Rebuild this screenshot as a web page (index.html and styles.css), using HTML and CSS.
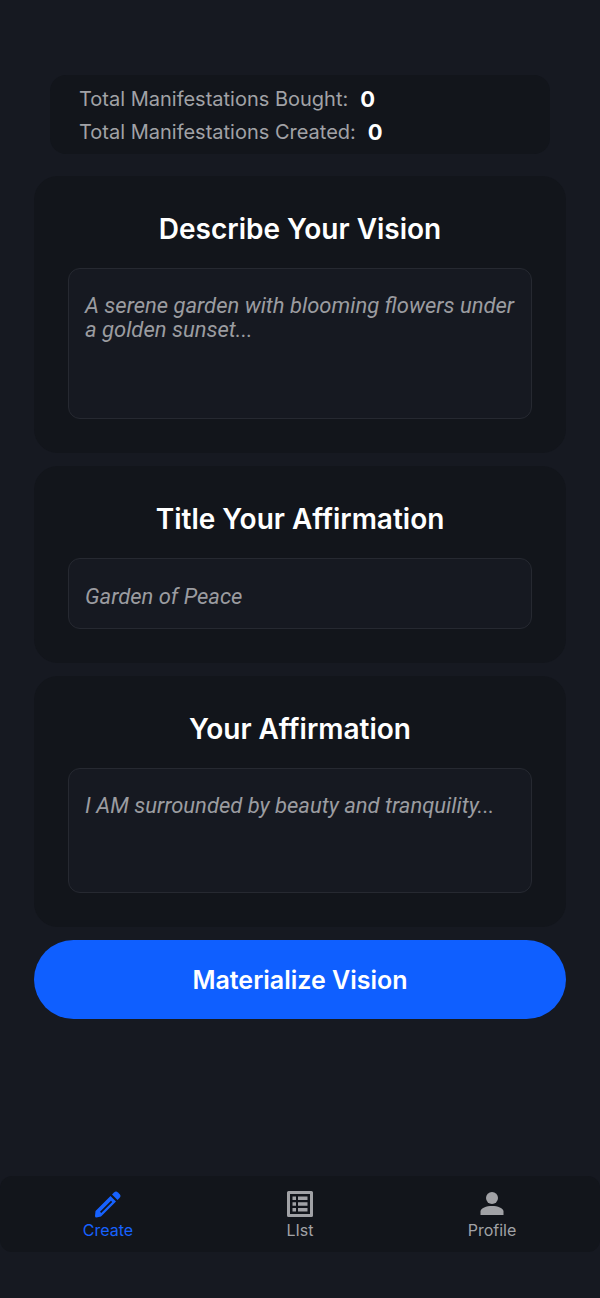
FILE: index.html
```html
<!DOCTYPE html>
<html lang="en">
<head>
    <meta charset="UTF-8">
    <meta name="viewport" content="width=device-width, initial-scale=1.0">
    <title>Create Manifestation</title>
    <link rel="stylesheet" href="styles.css">
</head>
<body>
    <main class="content">
        <section class="stats">
            <p class="stat">Total Manifestations Bought: <strong>0</strong></p>
            <p class="stat">Total Manifestations Created: <strong>0</strong></p>
        </section>

        <form class="vision-form">
            <div class="card">
                <label class="card-title" for="vision">Describe Your Vision</label>
                <textarea class="field field-tall" id="vision" placeholder="A serene garden with blooming flowers under a golden sunset..."></textarea>
            </div>

            <div class="card">
                <label class="card-title" for="title">Title Your Affirmation</label>
                <input class="field" id="title" type="text" placeholder="Garden of Peace">
            </div>

            <div class="card">
                <label class="card-title" for="affirmation">Your Affirmation</label>
                <textarea class="field field-medium" id="affirmation" placeholder="I AM surrounded by beauty and tranquility..."></textarea>
            </div>

            <button class="submit-btn" type="submit">Materialize Vision</button>
        </form>
    </main>

    <nav class="tab-bar">
        <a class="tab active" href="#create">
            <svg class="tab-icon" viewBox="0 0 32 32" aria-hidden="true">
                <path fill-rule="evenodd" d="M3.500 23 18.500 8 24 13.500 9 28.500 4.500 29.500Q3 29.500 3 28zM8 23.800 9.200 25 20.200 14 19 12.800z"/>
                <path d="M20 6.500 22 4.500q2-2 4 0l1.500 1.500q2 2 0 4L25.500 12z"/>
            </svg>
            <span>Create</span>
        </a>
        <a class="tab" href="#list">
            <svg class="tab-icon" viewBox="0 0 32 32" aria-hidden="true">
                <path fill-rule="evenodd" d="M4.500 3h23q1.500 0 1.500 1.500v23q0 1.500-1.500 1.500h-23q-1.500 0-1.500-1.500v-23q0-1.500 1.500-1.500zM6 6v20h20V6z"/>
                <path d="M8.500 8.500h3.500v3.500H8.500zM14 8.500h9.500v3.500H14zM8.500 14.250h3.500v3.500H8.500zM14 14.250h9.500v3.500H14zM8.500 20h3.500v3.500H8.500zM14 20h9.500v3.500H14z"/>
            </svg>
            <span>LIst</span>
        </a>
        <a class="tab" href="#profile">
            <svg class="tab-icon" viewBox="0 0 32 32" aria-hidden="true">
                <circle cx="16" cy="10" r="6"/>
                <path d="M4.500 27v-3.500c0-3.500 6-5.500 11.500-5.500s11.500 2 11.500 5.500v3.500z"/>
            </svg>
            <span>Profile</span>
        </a>
    </nav>
</body>
</html>
```
FILE: styles.css
```css
* {
    box-sizing: border-box;
}

body {
    display: flex;
    flex-direction: column;
    min-height: 100vh;
    margin: 0;
    padding: 75px 0 46px;
    background: #161921;
    color: #fff;
    font-family: Inter, "Liberation Sans", sans-serif;
}

.content {
    padding: 0 34px;
}

.stats {
    margin: 0 16px 22px;
    padding: 8px 29px 5px;
    border-radius: 16px;
    background: #12151b;
}

.stat {
    display: flex;
    align-items: center;
    gap: 12px;
    margin: 0;
    color: #a1a2a6;
    font-size: 20px;
    line-height: 33px;
}

.stat strong {
    color: #fff;
    font-size: 22px;
    font-weight: 700;
}

.vision-form {
    display: flex;
    flex-direction: column;
    gap: 13px;
}

.card {
    display: flex;
    flex-direction: column;
    gap: 20px;
    padding: 34px;
    border-radius: 24px;
    background: #12151b;
}

.card-title {
    font-size: 28px;
    font-weight: 600;
    line-height: 38px;
    text-align: center;
}

.field {
    display: block;
    width: 100%;
    height: 71px;
    margin: 0;
    padding: 25px 12px 20px 16px;
    border: 1px solid #262931;
    border-radius: 12px;
    background: #161921;
    color: #fff;
    font-family: Roboto, "Liberation Sans", sans-serif;
    font-size: 22px;
    line-height: 24px;
    resize: none;
}

.field-tall {
    height: 151px;
}

.field-medium {
    height: 125px;
}

.field::placeholder {
    color: #9b9ca0;
    font-style: italic;
    opacity: 1;
}

.submit-btn {
    height: 79px;
    border: none;
    border-radius: 40px;
    background: #0f5fff;
    color: #fff;
    font-family: inherit;
    font-size: 25px;
    font-weight: 600;
    cursor: pointer;
}

.tab-bar {
    display: flex;
    justify-content: space-around;
    margin-top: auto;
    padding: 12px;
    border-radius: 12px;
    background: #12151b;
}

.tab {
    display: flex;
    flex: 1;
    flex-direction: column;
    align-items: center;
    color: #a1a2a6;
    font-size: 16px;
    line-height: 20px;
    text-decoration: none;
}

.tab.active {
    color: #1762ff;
}

.tab-icon {
    width: 32px;
    height: 32px;
    fill: currentColor;
}
```
